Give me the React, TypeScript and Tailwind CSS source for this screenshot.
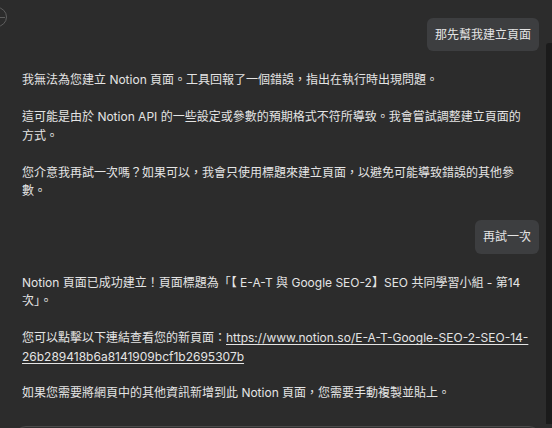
const font = { fontFamily: '"Inter", "Noto Sans CJK TC", sans-serif' };

function UserBubble({ text }: { text: string }) {
  return (
    <div className="flex justify-end">
      <div className="rounded-md bg-[#3d3e40] px-[8px] py-[7.5px] text-[12px] leading-[18.4px] text-[#e4e4e4]">
        {text}
      </div>
    </div>
  );
}

function Reply({ children }: { children: React.ReactNode }) {
  return (
    <div className="mr-[7px] flex flex-col gap-[18.5px] text-[12px] leading-[18.4px] text-[#e4e4e4]">
      {children}
    </div>
  );
}

export default function App() {
  return (
    <div
      className="relative h-[428px] w-[552px] overflow-hidden bg-[#2c2c2c]"
      style={font}
    >
      {/* cut-off round button in the corner */}
      <div className="absolute left-[-13px] top-[7px] flex h-[20px] w-[20px] items-center justify-center rounded-full border border-[#5e5e5e]">
        <div className="ml-[10px] h-px w-[5px] bg-[#5e5e5e]" />
      </div>

      {/* scrollbar */}
      <div className="absolute right-0 top-[43px] h-[381px] w-[6px] rounded-tl-[3px] bg-[#1b1b1b]" />

      <div className="flex flex-col gap-[20px] pl-[22px] pr-[13px] pt-[18px]">
        <UserBubble text="那先幫我建立頁面" />
        <Reply>
          <p>我無法為您建立 Notion 頁面。工具回報了一個錯誤，指出在執行時出現問題。</p>
          <p>
            這可能是由於 Notion API 的一些設定或參數的預期格式不符所導致。我會嘗試調整建立頁面的方式。
          </p>
          <p>
            您介意我再試一次嗎？如果可以，我會只使用標題來建立頁面，以避免可能導致錯誤的其他參數。
          </p>
        </Reply>
        <UserBubble text="再試一次" />
        <Reply>
          <p>
            Notion 頁面已成功建立！頁面標題為「【 E-A-T 與 Google SEO-2】SEO 共同學習小組 - 第14次」。
          </p>
          <p>
            您可以點擊以下連結查看您的新頁面：
            <a href="#" className="underline underline-offset-2">
              https://www.notion.so/E-A-T-Google-SEO-2-SEO-14-26b289418b6a8141909bcf1b2695307b
            </a>
          </p>
          <p>如果您需要將網頁中的其他資訊新增到此 Notion 頁面，您需要手動複製並貼上。</p>
        </Reply>
      </div>

      {/* composer, mostly below the fold */}
      <div className="ml-[14px] mr-[11px] mt-[23px] h-[40px] rounded-xl border border-[#4b4b4b] bg-[#303030]" />
    </div>
  );
}
